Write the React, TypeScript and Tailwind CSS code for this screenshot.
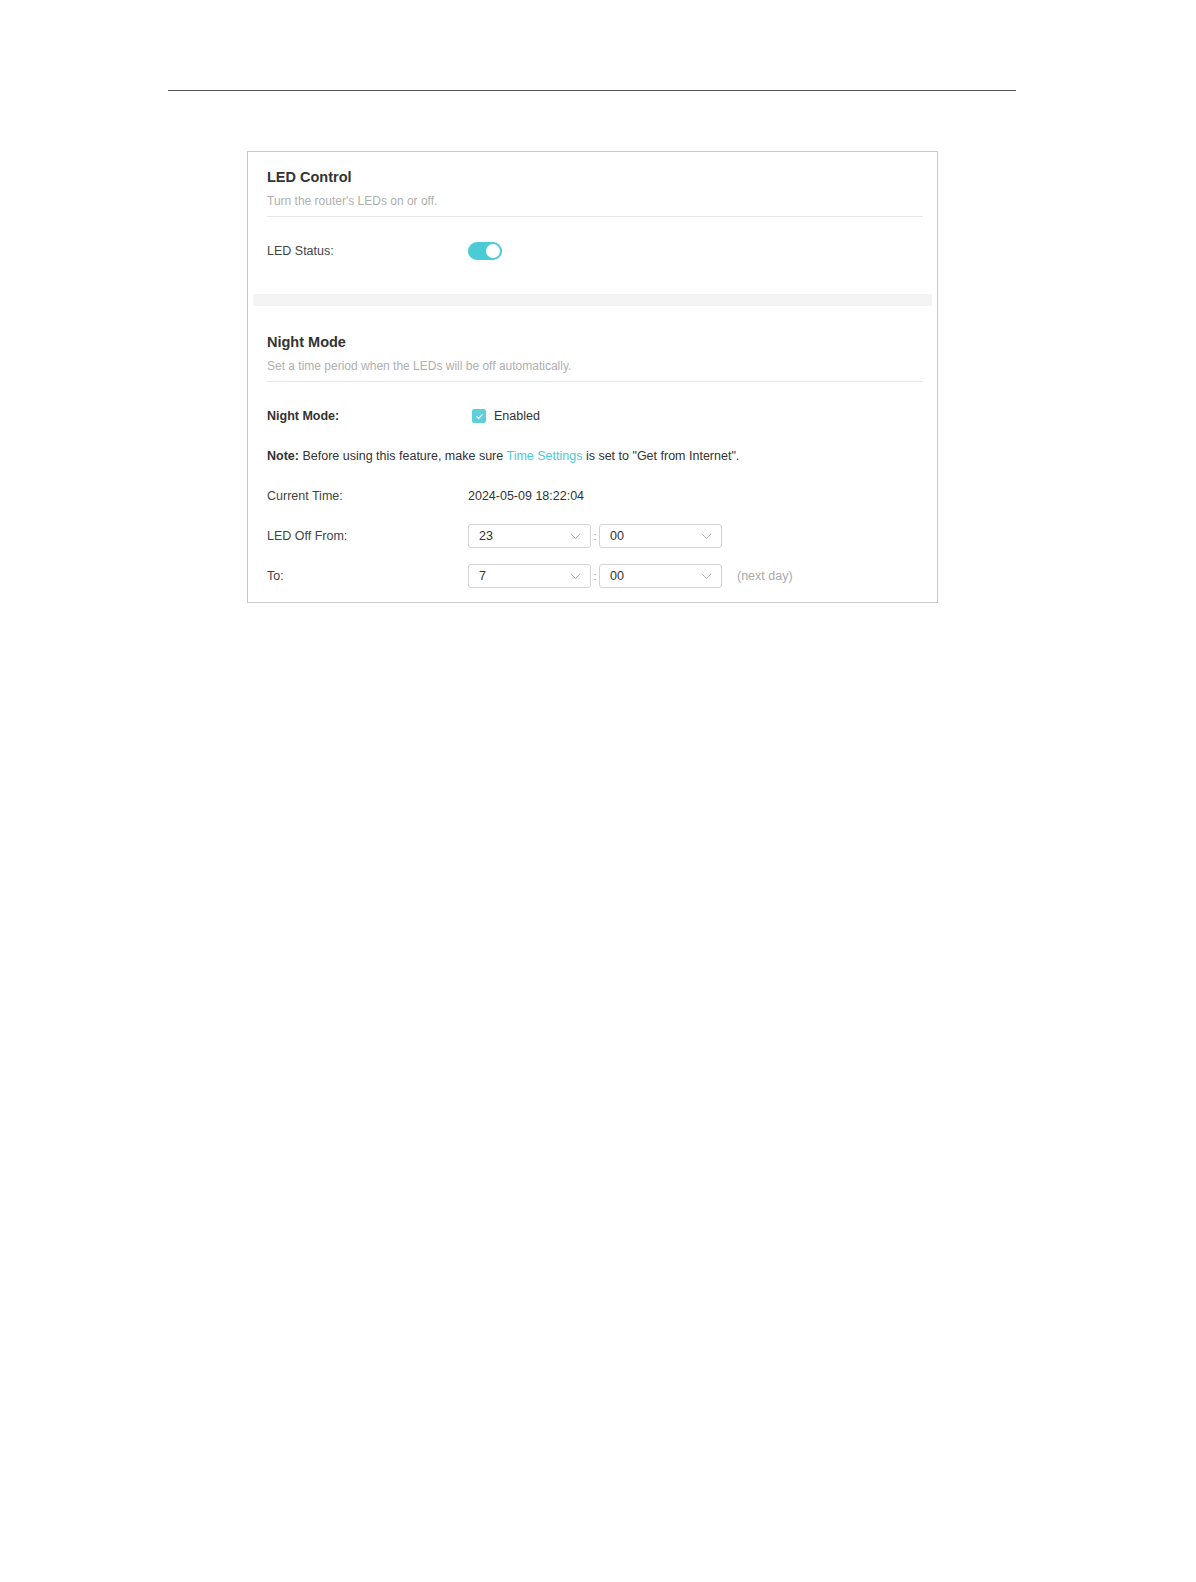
import React from "react";

const font = { fontFamily: '"Liberation Sans", Arial, sans-serif' };

function Toggle() {
	return (
		<div className="w-[34px] h-[18px] rounded-full bg-[#4acbd6] flex items-center justify-end pr-[2px]">
			<div className="w-[14px] h-[14px] rounded-full bg-white" />
		</div>
	);
}

function Checkbox() {
	return (
		<div className="w-[14px] h-[14px] rounded-[2px] bg-[#5fcfd9] flex items-center justify-center">
			<svg width="9" height="9" viewBox="0 0 10 10" fill="none">
				<path d="M2 5.2 L4.2 7.2 L8 3" stroke="white" strokeWidth="1.2" strokeLinecap="round" strokeLinejoin="round" />
			</svg>
		</div>
	);
}

function Select({ value }: { value: string }) {
	return (
		<div className="w-[123px] h-[24px] border border-[#d4d4d4] rounded-[3px] flex items-center justify-between pl-[10px] pr-[9px] text-[#333]">
			<span>{value}</span>
			<svg width="11" height="7" viewBox="0 0 11 7" fill="none">
				<path d="M1 1 L5.5 5.5 L10 1" stroke="#b8b8b8" strokeWidth="1" />
			</svg>
		</div>
	);
}

function Row({ label, bold, children }: { label?: string; bold?: boolean; children: React.ReactNode }) {
	return (
		<div className="h-[40px] flex items-center">
			{label !== undefined && (
				<div className={`w-[201px] shrink-0 ${bold ? "font-bold text-[#333]" : "text-[#444]"}`}>{label}</div>
			)}
			{children}
		</div>
	);
}

function TimeRow({ label, hour, extra }: { label: string; hour: string; extra?: boolean }) {
	return (
		<Row label={label}>
			<Select value={hour} />
			<span className="w-[8px] text-center text-[#999] text-[11px]">:</span>
			<Select value="00" />
			{extra && <span className="ml-[15px] text-[#aaa]">(next day)</span>}
		</Row>
	);
}

function SectionHeader({ title, sub }: { title: string; sub: string }) {
	return (
		<div className="border-b border-[#e6e6e6] pb-[7px]">
			<div className="text-[14.5px] leading-[20px] font-bold text-[#333]">{title}</div>
			<div className="mt-[6px] text-[12px] leading-[16px] text-[#b0b0b0]">{sub}</div>
		</div>
	);
}

export default function App() {
	return (
		<div className="w-full bg-white text-[12.5px] pb-[900px]" style={font}>
			<div className="pt-[90px] pl-[168px]">
				<div className="w-[848px] h-px bg-[#555]" />
			</div>
			<div className="ml-[247px] mt-[60px] w-[691px] border border-[#c8c8c8]">
				<div className="pl-[19px] pr-[14px] pt-[15px]">
					<SectionHeader title="LED Control" sub="Turn the router's LEDs on or off." />
					<div className="mt-[14px]">
						<Row label="LED Status:">
							<Toggle />
						</Row>
					</div>
				</div>
				<div className="mx-[5px] mt-[23px] h-[12px] bg-[#f4f4f4]" />
				<div className="pl-[19px] pr-[14px] pt-[26px] pb-[6px]">
					<SectionHeader title="Night Mode" sub="Set a time period when the LEDs will be off automatically." />
					<div className="mt-[14px]">
						<Row label="Night Mode:" bold>
							<div className="flex items-center gap-[8px] pl-[4px] text-[#333]">
								<Checkbox />
								<span>Enabled</span>
							</div>
						</Row>
						<Row>
							<div className="text-[#333]">
								<span className="font-bold">Note:</span> Before using this feature, make sure{" "}
								<span className="text-[#4acbd6]">Time Settings</span> is set to "Get from Internet".
							</div>
						</Row>
						<Row label="Current Time:">
							<span className="text-[#333]">2024-05-09 18:22:04</span>
						</Row>
						<TimeRow label="LED Off From:" hour="23" />
						<TimeRow label="To:" hour="7" extra />
					</div>
				</div>
			</div>
		</div>
	);
}
